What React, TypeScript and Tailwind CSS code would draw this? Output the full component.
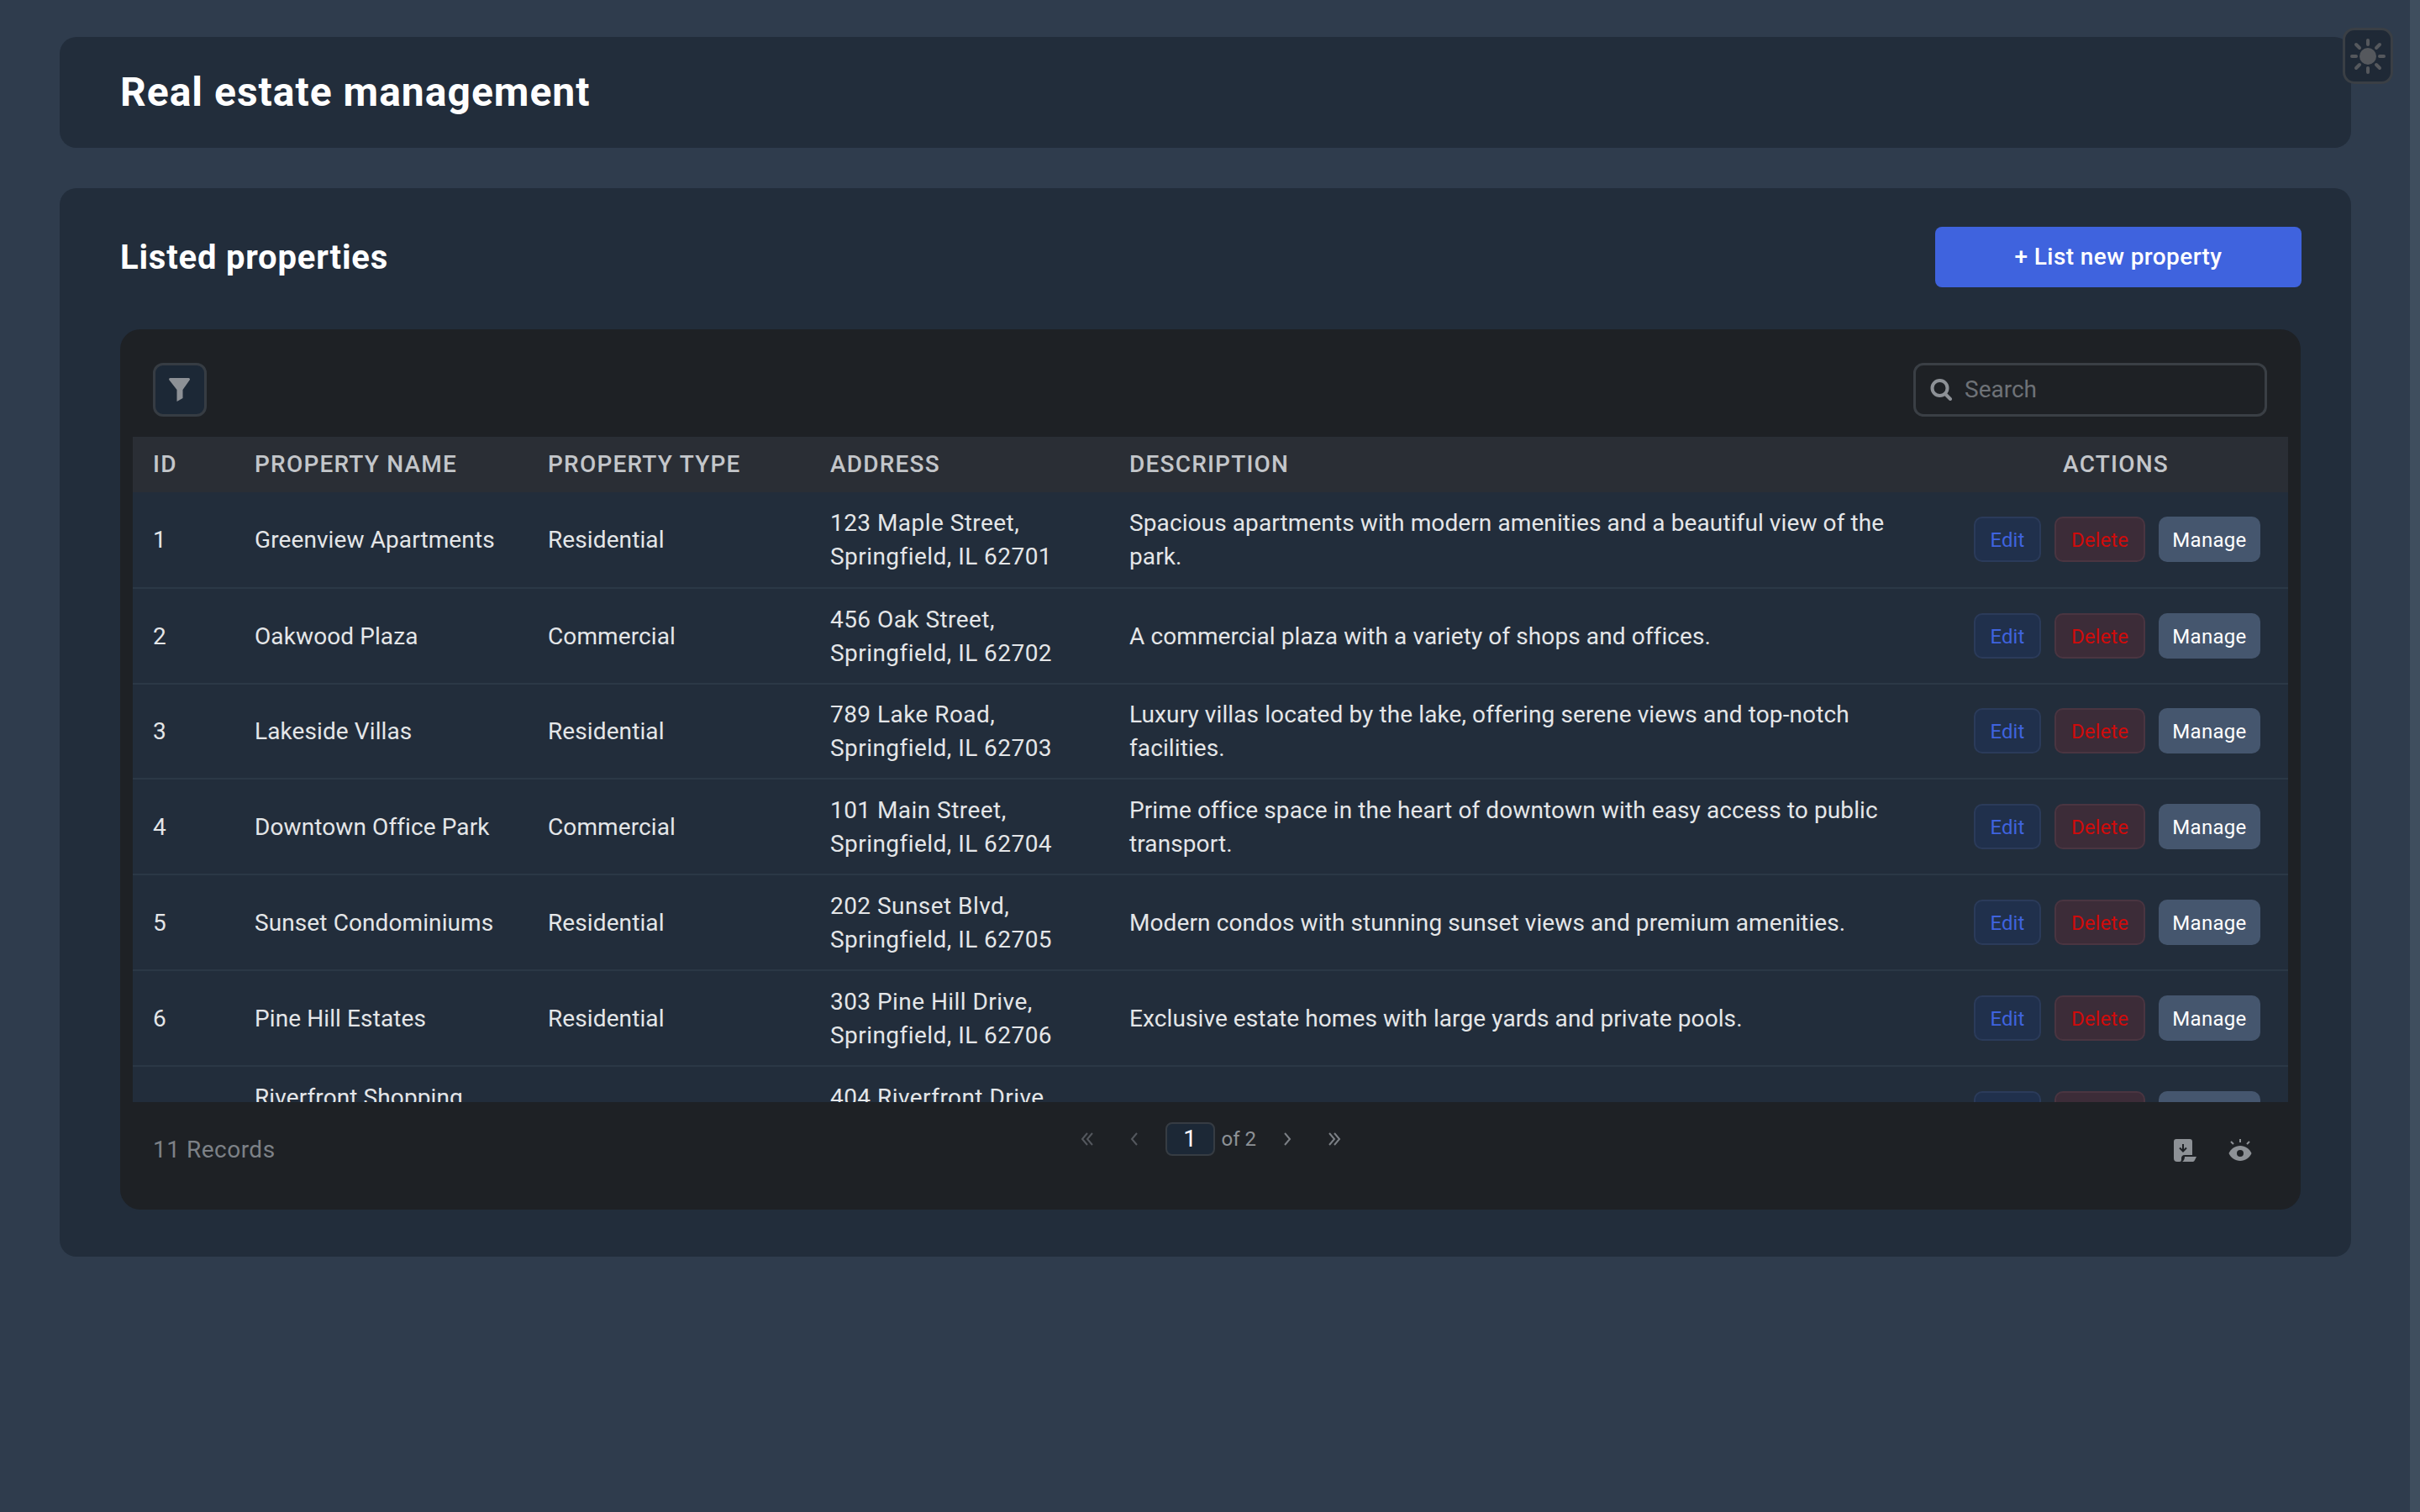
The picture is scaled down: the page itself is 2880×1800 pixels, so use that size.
const rows = [
  { id: 1, name: "Greenview Apartments", type: "Residential", street: "123 Maple Street,", city: "Springfield, IL 62701", description: "Spacious apartments with modern amenities and a beautiful view of the park." },
  { id: 2, name: "Oakwood Plaza", type: "Commercial", street: "456 Oak Street,", city: "Springfield, IL 62702", description: "A commercial plaza with a variety of shops and offices." },
  { id: 3, name: "Lakeside Villas", type: "Residential", street: "789 Lake Road,", city: "Springfield, IL 62703", description: "Luxury villas located by the lake, offering serene views and top-notch facilities." },
  { id: 4, name: "Downtown Office Park", type: "Commercial", street: "101 Main Street,", city: "Springfield, IL 62704", description: "Prime office space in the heart of downtown with easy access to public transport." },
  { id: 5, name: "Sunset Condominiums", type: "Residential", street: "202 Sunset Blvd,", city: "Springfield, IL 62705", description: "Modern condos with stunning sunset views and premium amenities." },
  { id: 6, name: "Pine Hill Estates", type: "Residential", street: "303 Pine Hill Drive,", city: "Springfield, IL 62706", description: "Exclusive estate homes with large yards and private pools." },
  { id: 7, name: "Riverfront Shopping Center", type: "Commercial", street: "404 Riverfront Drive,", city: "Springfield, IL 62707", description: "A bustling shopping center along the river with retail and dining." },
];

function SunIcon() {
  return (
    <svg width="44" height="44" viewBox="-22 -22 44 44" fill="#55585d" stroke="#55585d" strokeWidth="4" strokeLinecap="round">
      <circle r="10" stroke="none" />
      <path d="M0-14v-5M0 14v5M-14 0h-5M14 0h5M-10-10l-4-4M10-10l4-4M-10 10l-4 4M10 10l4 4" />
    </svg>
  );
}

function FilterIcon() {
  return (
    <svg width="26" height="28" viewBox="0 0 26 28" fill="#8d9196">
      <path d="M1.500 0h22a1.500 1.500 0 0 1 1.300 2.200L16.500 14v10L9.500 28V14L.3 2.200A1.500 1.500 0 0 1 1.500 0z" />
    </svg>
  );
}

function SearchIcon() {
  return (
    <svg width="27" height="26" viewBox="0 0 27 26" fill="none" stroke="#8d9196" strokeWidth="4" strokeLinecap="round">
      <circle cx="11.500" cy="11" r="9" />
      <path d="M18 18l6 6" />
    </svg>
  );
}

function ExportIcon() {
  return (
    <svg width="27" height="27" viewBox="0 0 27 27" fill="#8d9196">
      <path d="M3 0h16a3 3 0 0 1 3 3v16h-9c-3 0-4 2-4 4v2a2 2 0 0 1-2 2H4a4 4 0 0 1-4-4V3a3 3 0 0 1 3-3z" />
      <path d="M13 21h14l-2 4a3 3 0 0 1-2 2H10c2-1 3-4 3-6z" />
      <path d="M11 6v8M7 10.500l4 4 4-4" fill="none" stroke="#1e2125" strokeWidth="2" />
    </svg>
  );
}

function EyeIcon() {
  return (
    <svg width="28" height="26" viewBox="0 0 28 26" fill="#8d9196">
      <path d="M14 8c6 0 11 3.500 13.500 9C25 22.500 20 26 14 26S3 22.500.5 17C3 11.500 8 8 14 8z" />
      <circle cx="14" cy="17" r="4" fill="#1e2125" />
      <path d="M14 0v4M3 3l3 3M25 3l-3 3" stroke="#8d9196" strokeWidth="2" />
    </svg>
  );
}

function Chevrons({ d, dim }: { d: string; dim?: boolean }) {
  return (
    <svg width="20" height="20" viewBox="0 0 20 20" fill="none" stroke={dim ? "#54585e" : "#7c8086"} strokeWidth="2">
      <path d={d} />
    </svg>
  );
}

export default function App() {
  return (
    <div className="flex h-[1800px] overflow-hidden bg-[#2f3c4d] font-['Roboto',sans-serif] text-[28px] text-[#e4e6e8]">
      <main className="relative flex-1 pt-[44px] pl-[71px] pr-[70px]">
        {/* Theme toggle */}
        <button className="absolute right-[20px] top-[33px] flex h-[67px] w-[60px] items-center justify-center rounded-[14px] border-[3px] border-[#3a3f45] bg-[#1f2936]">
          <SunIcon />
        </button>

        <header className="flex h-[132px] items-center rounded-[20px] bg-[#222d3b] pl-[72px]">
          <h1 className="text-[48px] font-bold tracking-[1px] text-white">Real estate management</h1>
        </header>

        <section className="mt-[48px] h-[1272px] rounded-[20px] bg-[#222d3b] pl-[72px] pr-[60px] pt-[46px]">
          <div className="flex h-[72px] items-center justify-between">
            <h2 className="pt-[2px] text-[40px] font-bold tracking-[0.8px] text-white">Listed properties</h2>
            <button className="-mr-px h-[72px] w-[436px] rounded-[8px] bg-[#3f63de] text-[28px] font-medium tracking-[0.4px] text-white">
              + List new property
            </button>
          </div>

          <div className="mt-[50px] h-[1048px] rounded-[24px] bg-[#1e2125] px-[15px]">
            <div className="flex h-[128px] items-start justify-between pl-[24px] pr-[25px] pt-[40px]">
              <button className="flex h-[64px] w-[64px] items-center justify-center rounded-[12px] border-[3px] border-[#363c43] bg-[#1c2836]">
                <FilterIcon />
              </button>
              <div className="flex h-[64px] w-[421px] items-center gap-[14px] rounded-[12px] border-[3px] border-[#3a3f45] pl-[17px]">
                <SearchIcon />
                <span className="text-[#6e7277]">Search</span>
              </div>
            </div>

            <div className="h-[792px] overflow-hidden">
              <table className="w-full table-fixed border-collapse text-left">
                <colgroup>
                  <col className="w-[121px]" />
                  <col className="w-[349px]" />
                  <col className="w-[336px]" />
                  <col className="w-[356px]" />
                  <col />
                  <col className="w-[406px]" />
                </colgroup>
                <thead>
                  <tr className="h-[66px] bg-[#2a2e35] font-medium tracking-[1.2px] text-[#c3c6ca]">
                    <th className="pl-[24px] font-medium">ID</th>
                    <th className="pl-[24px] font-medium">PROPERTY NAME</th>
                    <th className="pl-[24px] font-medium">PROPERTY TYPE</th>
                    <th className="pl-[24px] font-medium">ADDRESS</th>
                    <th className="pl-[24px] font-medium">DESCRIPTION</th>
                    <th className="pr-[4px] text-center font-medium">ACTIONS</th>
                  </tr>
                </thead>
                <tbody className="leading-[40px] tracking-[0.1px]">
                  {rows.map((row) => (
                    <tr key={row.id} className="h-[113.8px] border-b-2 border-[#2b3846] bg-[#222d3b]">
                      <td className="pl-[24px] pt-[2px]">{row.id}</td>
                      <td className="pl-[24px] pr-[24px] pt-[2px]">{row.name}</td>
                      <td className="pl-[24px] pt-[2px]">{row.type}</td>
                      <td className="pl-[24px] pt-[2px] tracking-[0.45px]">
                        {row.street}
                        <br />
                        {row.city}
                      </td>
                      <td className="pl-[24px] pr-[48px] pt-[2px]">{row.description}</td>
                      <td>
                        <div className="flex justify-end gap-[16px] pr-[33px] text-[24px] leading-none">
                          <button className="h-[54px] w-[80px] rounded-[10px] border-2 border-[#2b3b5a] bg-[#20304c] pt-[2px] text-[#3f63de]">Edit</button>
                          <button className="h-[54px] w-[108px] rounded-[10px] border-2 border-[#4a3541] bg-[#3c2c38] pt-[2px] text-[#d00b0b]">Delete</button>
                          <button className="h-[54px] w-[121px] rounded-[10px] bg-[#45566e] pt-[2px] tracking-[0.3px] text-white">Manage</button>
                        </div>
                      </td>
                    </tr>
                  ))}
                </tbody>
              </table>
            </div>

            <footer className="grid grid-cols-[1fr_auto_1fr] px-[24px]">
              <span className="pt-[36px] tracking-[0.5px] text-[#7d8187]">11 Records</span>
              <div className="flex h-[64px] items-center pr-[23px] pt-[24px]">
                <span className="flex w-[66px] justify-center"><Chevrons dim d="M10 3l-6 7 6 7M16 3l-6 7 6 7" /></span>
                <span className="flex w-[46px] justify-center"><Chevrons dim d="M13 3l-6 7 6 7" /></span>
                <span className="ml-[14px] flex h-[40px] w-[59px] items-center justify-center rounded-[8px] border-2 border-[#363c43] bg-[#1c2836] text-white">1</span>
                <span className="ml-[8px] w-[41px] whitespace-nowrap text-[24px] text-[#8d9196]">of 2</span>
                <span className="ml-[27px] flex w-[20px] justify-center"><Chevrons d="M7 3l6 7-6 7" /></span>
                <span className="ml-[36px] flex w-[20px] justify-center"><Chevrons d="M4 3l6 7-6 7M10 3l6 7-6 7" /></span>
              </div>
              <div className="flex items-start justify-end gap-[38px] pr-[19px] pt-[44px]">
                <ExportIcon />
                <EyeIcon />
              </div>
            </footer>
          </div>
        </section>
      </main>

      {/* Page scrollbar */}
      <div className="w-[12px] bg-[#3f4e5e]" />
    </div>
  );
}
